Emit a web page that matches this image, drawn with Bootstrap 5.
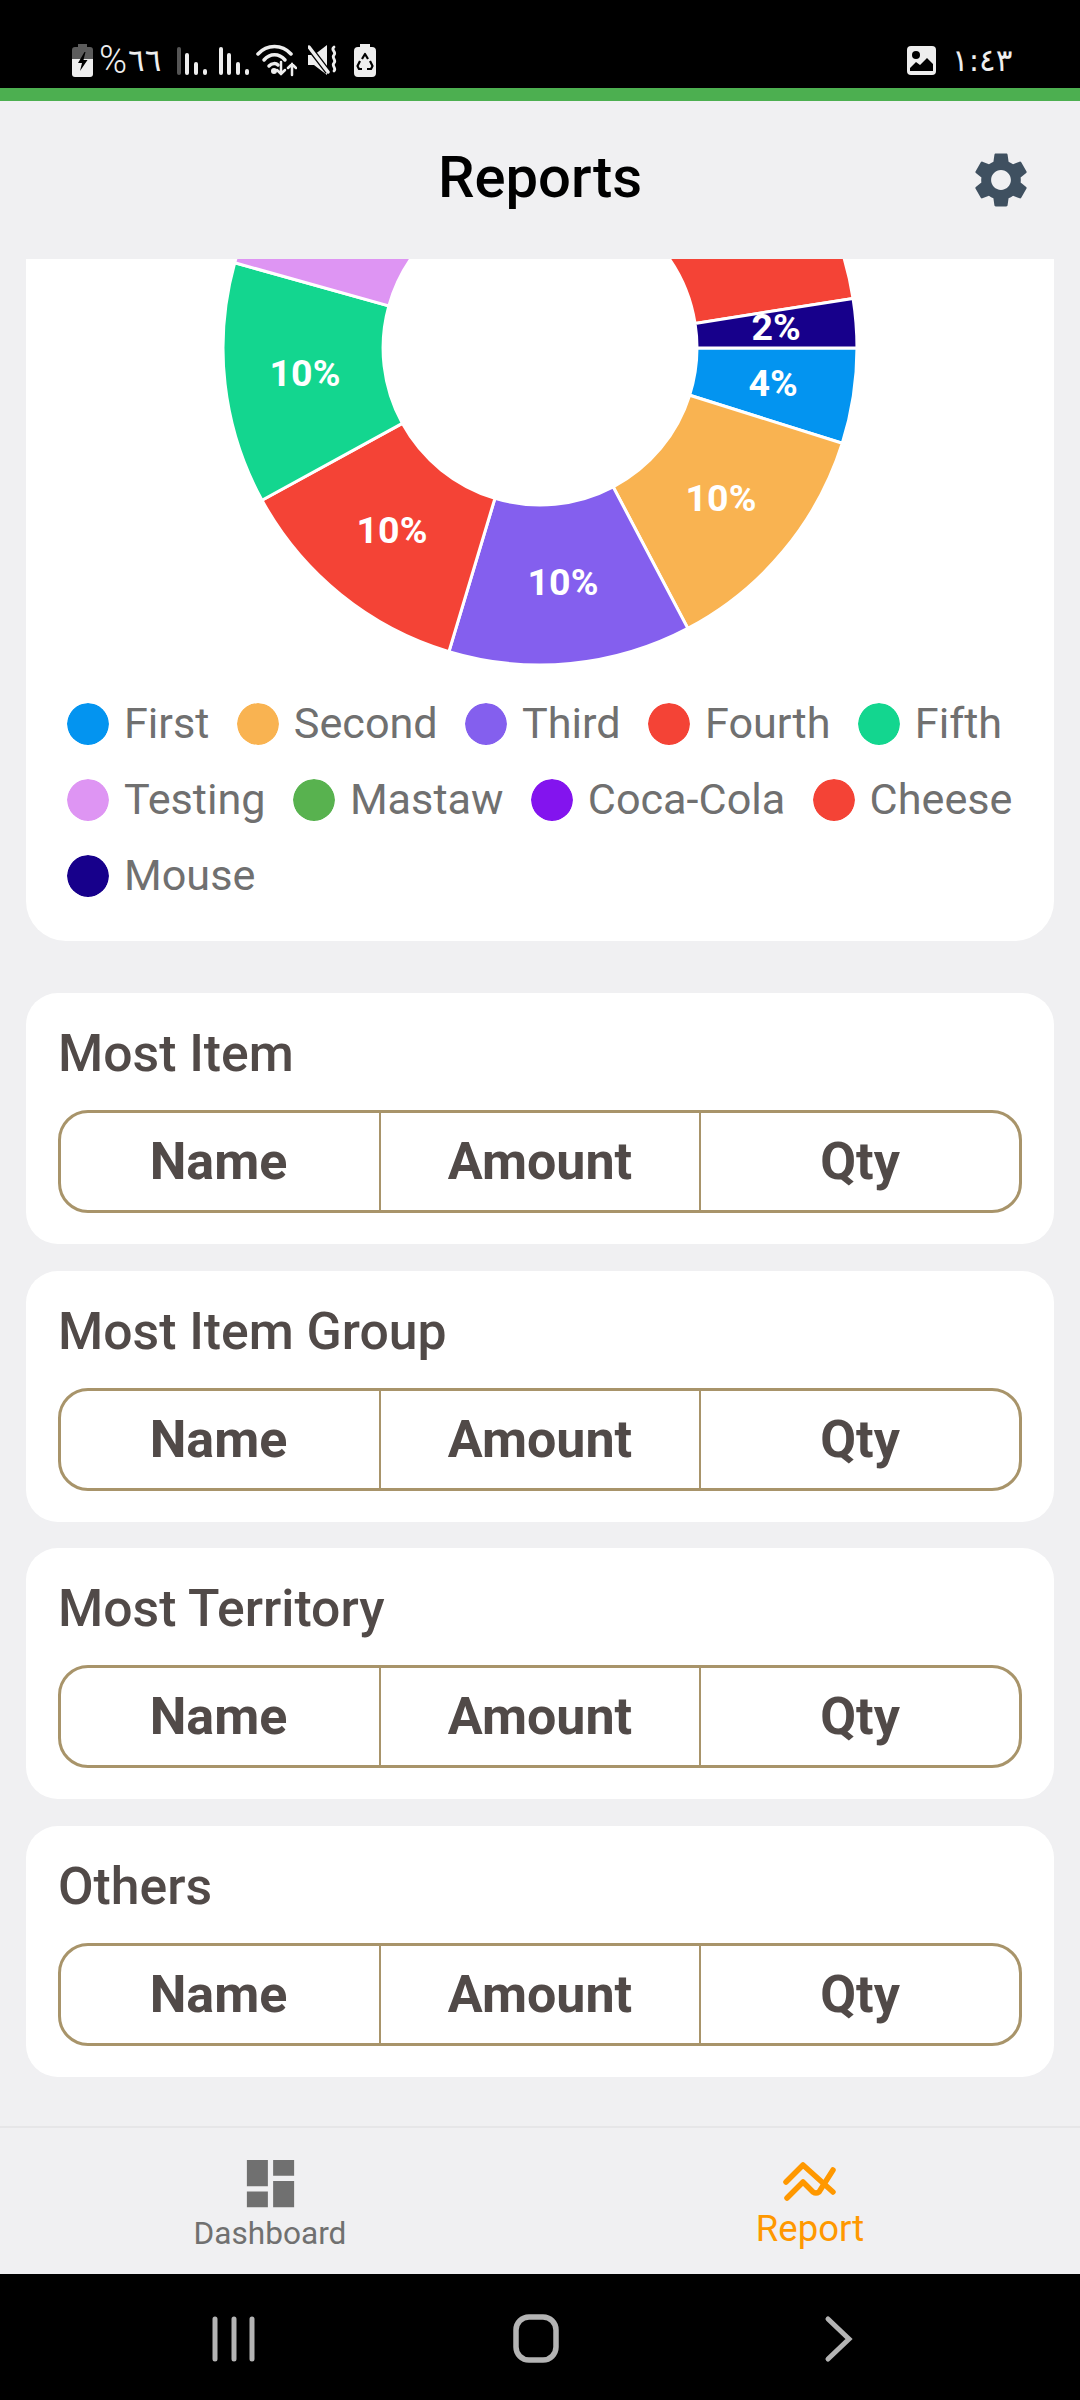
<!DOCTYPE html>
<html lang="en">
<head>
<meta charset="utf-8">
<title>Reports</title>
<link href="https://cdn.jsdelivr.net/npm/bootstrap@5.3.0/dist/css/bootstrap.min.css" rel="stylesheet">
<style>
html,body{margin:0;width:1080px;height:2400px;overflow:hidden}
body{font-family:Roboto,"Liberation Sans",sans-serif;background:#f0f0f2}
.phone{width:1080px;height:2400px}
.sysbar{height:88px;background:#000;padding:44px 72px 0;color:#eee;align-items:flex-start}
.sb-pct{font-size:38px;line-height:33px;margin-left:6px;width:29px;font-weight:300}
.sb-digits{font-family:"DejaVu Sans",sans-serif;font-size:31px;line-height:33px;letter-spacing:-3px;width:60px}
.sb-time{font-family:"DejaVu Sans",sans-serif;font-size:31px;line-height:32px;letter-spacing:-4px;margin-left:16px;width:56px}
.sb-g1{margin-left:-11px}.sb-g2{margin-left:11px}.sb-g3{margin-left:6px}.sb-g4{margin-left:11px}.sb-g5{margin-left:16px}
.sb-pic{margin-top:2px}
.strip{height:13px;background:#4caf50}
.appbar{height:158px;background:#f0f0f2;position:relative}
.appbar-title{font-size:58px;font-weight:500;color:#000;margin:0 0 6px;line-height:1}
.gear{position:absolute;left:968px;top:46px}
.scroller{height:1867px;padding:0 26px}
.panel{background:#fff;border-radius:32px;margin-bottom:26.5px}
.panel-chart{border-radius:0 0 40px 40px;height:682px;margin-bottom:52px}
.panel-chart svg{display:block}
.pie-label{font-family:Roboto,sans-serif;font-weight:700;font-size:37.500px;fill:#fff;text-anchor:middle;dominant-baseline:central}
.legend-box{padding:29px 20px 0 41px;column-gap:27.300px;row-gap:26px}
.legend-item{gap:15px;height:50px;font-size:43.200px;line-height:50px;color:#707070}
.swatch{width:42px;height:42px;border-radius:50%;display:block}
.panel-data{height:251px;padding:32px 32px 0}
.panel-title{font-size:51.700px;font-weight:500;line-height:58px;color:#514a48;margin:0 0 27px}
.data-head{height:103px;border:3px solid #a8946a;border-radius:30px}
.data-cell{flex:1 1 0;font-size:52px;font-weight:700;color:#514a48;border-left:2px solid #a8946a;line-height:97px;text-align:center}
.data-cell:first-child{border-left:0;text-indent:-3px}
.tabbar{height:148px;background:#f0f0f2;border-top:2px solid #e6e6e8}
.tab{flex:1 1 0;text-align:center;padding-top:24px}
.tab-report{padding-top:30px}
.tab svg{display:block;margin:0 auto}
.tab-label{font-size:31.600px;line-height:36px;color:#707070;margin-top:1px}
.tab-on{font-size:36.500px;line-height:42px;color:#ff9800}
.navkeys{height:126px;background:#000}
.navkeys svg{position:absolute;top:0;left:0}
</style>
</head>
<body>
<div class="phone d-flex flex-column">
  <div class="sysbar d-flex">
    <svg width="21" height="33" viewBox="0 0 21 33"><path d="M6 0h9v3h3a3 3 0 0 1 3 3v9H0V6a3 3 0 0 1 3-3h3z" fill="#5c5c5c"/><path d="M0 15h21v15a3 3 0 0 1-3 3H3a3 3 0 0 1-3-3z" fill="#eee"/><path d="M12.500 8 6 19h4l-2 8 7.500-11h-4l2-8z" fill="#000"/></svg>
    <span class="sb-pct">%</span>
    <span class="sb-digits" dir="ltr">٦٦</span>
    <svg width="31" height="33" viewBox="0 0 31 33" class="sb-g1"><g fill="#eee"><rect x="0" y="3" width="4" height="28" rx="2" fill="#555"/><rect x="8" y="9" width="4" height="22" rx="2"/><rect x="17" y="18" width="4" height="13" rx="2"/><rect x="26" y="25" width="4" height="6" rx="2"/></g></svg>
    <svg width="31" height="33" viewBox="0 0 31 33" class="sb-g2"><g fill="#eee"><rect x="0" y="3" width="4" height="28" rx="2"/><rect x="8" y="9" width="4" height="22" rx="2"/><rect x="17" y="18" width="4" height="13" rx="2"/><rect x="26" y="25" width="4" height="6" rx="2"/></g></svg>
    <svg width="41" height="33" viewBox="0 0 41 33" class="sb-g3"><g fill="none" stroke="#eee" stroke-width="3.500" stroke-linecap="round"><path d="M2 10C11 0 26 0 35 10"/><path d="M8 16C14 9 23 9 29 16"/><path d="M13 22C16 19 20 19 22 21"/><path d="M25 18v12M21 26l4 4 4-4" stroke-width="2.500"/><path d="M36 31V20M32 24l4-4 4 4" stroke-width="2.500"/></g><circle cx="18" cy="27" r="3" fill="#eee"/></svg>
    <svg width="30" height="33" viewBox="0 0 30 33" class="sb-g4"><path d="M0 11h6L19 1v30L6 21H0z" fill="#eee"/><path d="M1 3l19 25" stroke="#000" stroke-width="6"/><path d="M1 3l19 25" stroke="#eee" stroke-width="3.500" stroke-linecap="round"/><path d="M26 3c-4 3 3 5 0 8s3 5 0 8 3 5 0 8" fill="none" stroke="#eee" stroke-width="2.800" stroke-linecap="round"/></svg>
    <svg width="22" height="33" viewBox="0 0 22 33" class="sb-g5"><path d="M6 0h10v3h2a4 4 0 0 1 4 4v22a4 4 0 0 1-4 4H4a4 4 0 0 1-4-4V7a4 4 0 0 1 4-4h2z" fill="#eee"/><g fill="none" stroke="#000" stroke-width="2.200" stroke-linejoin="round"><path d="M8 15l3-5 3 5"/><path d="M16 17l2.500 5-1.500 3h-4"/><path d="M8 25H5l-1.500-3 2.500-5"/></g></svg>
    <div class="flex-grow-1"></div>
    <svg width="29" height="29" viewBox="0 0 29 29" class="sb-pic"><rect width="29" height="29" rx="4" fill="#eee"/><circle cx="9" cy="9" r="4" fill="#000"/><path d="M3 25v-3l6-6 4 3 7-7 6 6v7z" fill="#000"/></svg>
    <span class="sb-time" dir="ltr">١:٤٣</span>
  </div>
  <div class="strip"></div>
  <div class="appbar d-flex align-items-center justify-content-center">
    <h1 class="appbar-title">Reports</h1>
    <svg class="gear" width="66" height="66" viewBox="0 0 24 24"><path fill="#3f5060" d="M19.140 12.940c.04-.3.06-.61.06-.94 0-.32-.02-.64-.07-.94l2.030-1.580c.18-.14.23-.41.12-.61l-1.920-3.320c-.12-.22-.37-.29-.59-.22l-2.390.96c-.5-.38-1.030-.7-1.620-.94l-.36-2.540c-.04-.24-.24-.41-.48-.41h-3.840c-.24 0-.43.17-.47.41l-.36 2.540c-.59.24-1.130.57-1.620.94l-2.390-.96c-.22-.08-.47 0-.59.22L2.740 8.870c-.12.21-.08.47.12.61l2.030 1.580c-.05.3-.09.63-.09.94s.02.64.07.94l-2.030 1.580c-.18.14-.23.41-.12.61l1.920 3.320c.12.22.37.29.59.22l2.390-.96c.5.38 1.030.7 1.620.94l.36 2.540c.05.24.24.41.48.41h3.840c.24 0 .44-.17.47-.41l.36-2.540c.59-.24 1.130-.56 1.620-.94l2.390.96c.22.08.47 0 .59-.22l1.920-3.320c.12-.22.07-.47-.12-.61l-2.010-1.580zM12 15.600c-1.980 0-3.600-1.620-3.600-3.600s1.620-3.600 3.600-3.600 3.600 1.620 3.600 3.600-1.620 3.600-3.600 3.600z"/></svg>
  </div>
  <div class="scroller overflow-hidden">
    <div class="panel panel-chart">
      <svg width="1028" height="411" viewBox="26 259 1028 411">
        <g stroke="#fff" stroke-width="3" transform="translate(540 348) scale(1.0063) translate(-540 -347)">
          <path fill="#0394f0" d="M855 347A315 315 0 0 1 840.400 441.700L688.700 393.900A156 156 0 0 0 696 347Z"/>
          <path fill="#f9b351" d="M840.400 441.700A315 315 0 0 1 686.900 625.600L612.700 485A156 156 0 0 0 688.700 393.900Z"/>
          <path fill="#845fee" d="M686.900 625.600A315 315 0 0 1 449.500 648.700L495.200 496.400A156 156 0 0 0 612.700 485Z"/>
          <path fill="#f44336" d="M449.500 648.700A315 315 0 0 1 263.700 498.300L403.200 421.900A156 156 0 0 0 495.200 496.400Z"/>
          <path fill="#13d68f" d="M263.700 498.300A315 315 0 0 1 236.600 262.300L389.800 305.100A156 156 0 0 0 403.200 421.900Z"/>
          <path fill="#de95f3" d="M236.600 262.300A315 315 0 0 1 382.500 74.200L462 211.900A156 156 0 0 0 389.800 305.100Z"/>
          <path fill="#58b24f" d="M382.500 74.200A315 315 0 0 1 616.200 41.400L577.800 195.700A156 156 0 0 0 462 211.900Z"/>
          <path fill="#8314ee" d="M616.200 41.400A315 315 0 0 1 781.300 144.500L659.500 246.600A156 156 0 0 0 577.800 195.700Z"/>
          <path fill="#f44336" d="M781.300 144.500A315 315 0 0 1 851.100 297.700L694.100 322.600A156 156 0 0 0 659.500 246.600Z"/>
          <path fill="#17008b" d="M851.100 297.700A315 315 0 0 1 855 347L696 347A156 156 0 0 0 694.100 322.600Z"/>
        </g>
        <text class="pie-label" x="776" y="327">2%</text>
        <text class="pie-label" x="773" y="383">4%</text>
        <text class="pie-label" x="721" y="498">10%</text>
        <text class="pie-label" x="563" y="582">10%</text>
        <text class="pie-label" x="392" y="530">10%</text>
        <text class="pie-label" x="305" y="373">10%</text>
      </svg>
      <div class="legend-box d-flex flex-wrap">
        <div class="legend-item d-flex align-items-center"><svg class="swatch" viewBox="0 0 2 2"><circle cx="1" cy="1" r="1" fill="#0394f0"/></svg>First</div>
        <div class="legend-item d-flex align-items-center"><svg class="swatch" viewBox="0 0 2 2"><circle cx="1" cy="1" r="1" fill="#f9b351"/></svg>Second</div>
        <div class="legend-item d-flex align-items-center"><svg class="swatch" viewBox="0 0 2 2"><circle cx="1" cy="1" r="1" fill="#845fee"/></svg>Third</div>
        <div class="legend-item d-flex align-items-center"><svg class="swatch" viewBox="0 0 2 2"><circle cx="1" cy="1" r="1" fill="#f44336"/></svg>Fourth</div>
        <div class="legend-item d-flex align-items-center"><svg class="swatch" viewBox="0 0 2 2"><circle cx="1" cy="1" r="1" fill="#13d68f"/></svg>Fifth</div>
        <div class="legend-item d-flex align-items-center"><svg class="swatch" viewBox="0 0 2 2"><circle cx="1" cy="1" r="1" fill="#de95f3"/></svg>Testing</div>
        <div class="legend-item d-flex align-items-center"><svg class="swatch" viewBox="0 0 2 2"><circle cx="1" cy="1" r="1" fill="#58b24f"/></svg>Mastaw</div>
        <div class="legend-item d-flex align-items-center"><svg class="swatch" viewBox="0 0 2 2"><circle cx="1" cy="1" r="1" fill="#8314ee"/></svg>Coca-Cola</div>
        <div class="legend-item d-flex align-items-center"><svg class="swatch" viewBox="0 0 2 2"><circle cx="1" cy="1" r="1" fill="#f44336"/></svg>Cheese</div>
        <div class="legend-item d-flex align-items-center"><svg class="swatch" viewBox="0 0 2 2"><circle cx="1" cy="1" r="1" fill="#17008b"/></svg>Mouse</div>
      </div>
    </div>
    <div class="panel panel-data">
      <h2 class="panel-title">Most Item</h2>
      <div class="data-head d-flex"><div class="data-cell">Name</div><div class="data-cell">Amount</div><div class="data-cell">Qty</div></div>
    </div>
    <div class="panel panel-data">
      <h2 class="panel-title">Most Item Group</h2>
      <div class="data-head d-flex"><div class="data-cell">Name</div><div class="data-cell">Amount</div><div class="data-cell">Qty</div></div>
    </div>
    <div class="panel panel-data">
      <h2 class="panel-title">Most Territory</h2>
      <div class="data-head d-flex"><div class="data-cell">Name</div><div class="data-cell">Amount</div><div class="data-cell">Qty</div></div>
    </div>
    <div class="panel panel-data">
      <h2 class="panel-title">Others</h2>
      <div class="data-head d-flex"><div class="data-cell">Name</div><div class="data-cell">Amount</div><div class="data-cell">Qty</div></div>
    </div>
  </div>
  <div class="tabbar d-flex">
    <div class="tab">
      <svg width="63" height="63" viewBox="0 0 24 24"><path fill="#707070" d="M3 13h8V3H3v10zm0 8h8v-6H3v6zm10 0h8V11h-8v10zm0-18v6h8V3h-8z"/></svg>
      <div class="tab-label">Dashboard</div>
    </div>
    <div class="tab tab-report">
      <svg width="60" height="50" viewBox="780 2158 60 50"><g fill="none" stroke="#ff9800" stroke-width="5.500" stroke-linecap="round" stroke-linejoin="round"><path d="M786 2182l17-17 30 27"/><path d="M787 2198l16-16 10 10q3 2 6 0l14-22"/></g></svg>
      <div class="tab-on">Report</div>
    </div>
  </div>
  <div class="navkeys position-relative">
    <svg width="1080" height="126" viewBox="0 2274 1080 126"><g fill="none" stroke="#b4b4b4" stroke-linecap="round"><path d="M215 2319v40M234 2319v40M252 2319v40" stroke-width="5"/><rect x="516" y="2317" width="40" height="43" rx="13" stroke-width="5.500"/><path d="M828 2319l21 20-21 20" stroke-width="5"/></g></svg>
  </div>
</div>
</body>
</html>
